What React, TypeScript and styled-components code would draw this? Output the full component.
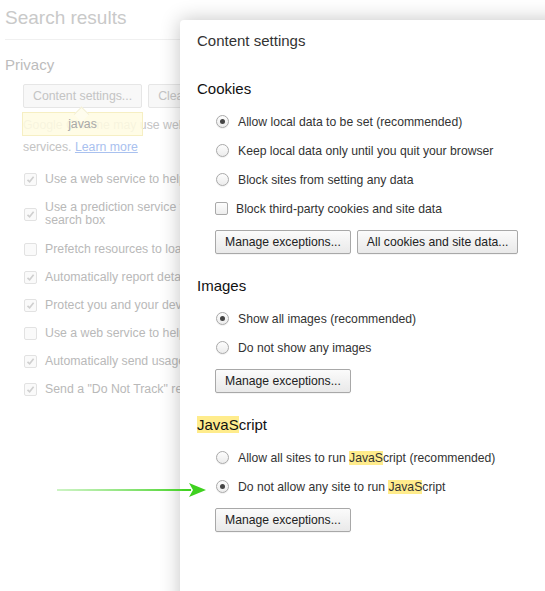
import React from "react";
import styled, { createGlobalStyle } from "styled-components";

const Global = createGlobalStyle`
  html, body { margin: 0; padding: 0; background: #fff; }
  body { font-family: "Liberation Sans", Arial, sans-serif; }
`;

const Screen = styled.div`
  position: relative;
  width: 545px;
  height: 591px;
  overflow: hidden;
  background: #fff;
`;

/* ---------- background settings page ---------- */
const Page = styled.div`
  width: 760px;
  padding: 6px 0 0 5px;
  color: #bdbdbd;
  font-size: 12.3px;
`;

const PageTitle = styled.div`
  font-size: 19px;
  line-height: 24px;
  color: #c9c9c9;
  padding-bottom: 9px;
  border-bottom: 1px solid #f0f0f0;
`;

const SectionTitle = styled.div`
  font-size: 15px;
  line-height: 20px;
  color: #bcbcbc;
  margin-top: 15px;
`;

const PageBody = styled.div`
  padding-left: 18px;
`;

const ButtonRow = styled.div`
  position: relative;
  display: flex;
  gap: 6px;
  margin-top: 9px;
`;

const GhostButton = styled.div`
  height: 24px;
  box-sizing: border-box;
  padding: 0 9px;
  display: flex;
  align-items: center;
  border: 1px solid #e6e6e6;
  border-radius: 2px;
  background: #f8f8f8;
  color: #c4c4c4;
  white-space: nowrap;
`;

const Tooltip = styled.div`
  position: absolute;
  left: -1px;
  top: 28px;
  width: 121px;
  height: 24px;
  box-sizing: border-box;
  background: rgba(255, 252, 226, 0.86);
  border: 1px solid #f6efc3;
  display: flex;
  align-items: center;
  justify-content: center;
  color: #a8a8a8;
  z-index: 1;
  &::before {
    content: "";
    position: absolute;
    left: 53px;
    top: -7px;
    width: 10px;
    height: 10px;
    background: #fffdee;
    border-left: 1px solid #f3efd6;
    border-top: 1px solid #f3efd6;
    transform: rotate(45deg) translate(2px, 2px);
  }
`;

const Desc = styled.div`
  margin-top: 6px;
  line-height: 22px;
  color: #c4c4c4;
  white-space: nowrap;
`;

const LearnMore = styled.span`
  color: #a9c1ef;
  text-decoration: underline;
`;

const CheckList = styled.div`
  margin-top: 7px;
  display: flex;
  flex-direction: column;
`;

const CheckRow = styled.div<{ $tall?: boolean }>`
  display: flex;
  align-items: center;
  gap: 8px;
  height: ${(p) => (p.$tall ? 42 : 28)}px;
  padding-left: 1px;
  white-space: nowrap;
  line-height: 13px;
  color: #b9b9b9;
`;

const GhostBox = styled.div`
  width: 11px;
  height: 11px;
  border: 1px solid #e2e2e2;
  border-radius: 2px;
  background: #fafafa;
  flex: none;
  display: flex;
  align-items: center;
  justify-content: center;
`;

/* ---------- dialog ---------- */
const Dialog = styled.div`
  position: absolute;
  left: 180px;
  top: 20px;
  width: 400px;
  height: 600px;
  background: #fff;
  border-top-left-radius: 4px;
  box-shadow: 0 0 20px rgba(0, 0, 0, 0.24);
  padding: 11px 0 0 17px;
  box-sizing: border-box;
  color: #333;
  z-index: 2;
`;

const DialogTitle = styled.div`
  font-size: 15px;
  line-height: 20px;
  color: #333;
  margin-bottom: 28px;
`;

const Section = styled.div`
  margin-bottom: 22px;
`;

const Heading = styled.div`
  font-size: 15px;
  line-height: 20px;
  color: #111;
  margin-bottom: 8px;
`;

const Options = styled.div`
  padding-left: 18px;
  display: flex;
  flex-direction: column;
`;

const OptionRow = styled.div`
  height: 29px;
  display: flex;
  align-items: center;
  gap: 9px;
  font-size: 12.2px;
  color: #333;
  white-space: nowrap;
`;

const Radio = styled.span<{ $checked?: boolean }>`
  width: 13px;
  height: 13px;
  margin-left: 1px;
  box-sizing: border-box;
  border-radius: 50%;
  border: 1px solid #a9a9a9;
  background: linear-gradient(#fdfdfd, #ececec);
  box-shadow: 0 1px 1px rgba(0, 0, 0, 0.06);
  display: flex;
  align-items: center;
  justify-content: center;
  flex: none;
  &::after {
    content: "";
    width: 5px;
    height: 5px;
    border-radius: 50%;
    background: #444;
    display: ${(p) => (p.$checked ? "block" : "none")};
  }
`;

const Check = styled.span`
  width: 13px;
  height: 13px;
  box-sizing: border-box;
  border: 1px solid #a9a9a9;
  border-radius: 2px;
  background: linear-gradient(#fdfdfd, #ededed);
  flex: none;
  margin-right: -1px;
`;

const Buttons = styled.div`
  display: flex;
  gap: 6px;
  margin-top: 7px;
`;

const Button = styled.div`
  height: 24px;
  box-sizing: border-box;
  padding: 0 9px;
  display: flex;
  align-items: center;
  border: 1px solid #a8a8a8;
  border-radius: 2px;
  background: linear-gradient(#fbfbfb, #e9e9e9);
  box-shadow: 0 1px 0 rgba(0, 0, 0, 0.04);
  font-size: 12.2px;
  color: #222;
  white-space: nowrap;
`;

const Mark = styled.span`
  background: #ffec8c;
`;

const Arrow = styled.svg`
  position: absolute;
  left: 55px;
  top: 482px;
  z-index: 3;
`;

const bgChecks: { text: React.ReactNode; checked: boolean; tall?: boolean }[] = [
  { text: "Use a web service to help resolve navigation errors", checked: true },
  {
    text: (
      <span>
        Use a prediction service to help complete searches and URLs typed in the address bar or the app launcher
        <br />
        search box
      </span>
    ),
    checked: true,
    tall: true,
  },
  { text: "Prefetch resources to load pages more quickly", checked: false },
  { text: "Automatically report details of possible security incidents to Google", checked: true },
  { text: "Protect you and your device from dangerous sites", checked: true },
  { text: "Use a web service to help resolve spelling errors", checked: false },
  { text: "Automatically send usage statistics and crash reports to Google", checked: true },
  { text: 'Send a "Do Not Track" request with your browsing traffic', checked: true },
];

const Tick = () => (
  <svg width="9" height="9" viewBox="0 0 9 9">
    <path d="M1.5 4.8 L3.6 6.8 L7.6 1.8" fill="none" stroke="#cfcfcf" strokeWidth="1.6" />
  </svg>
);

export default function App() {
  return (
    <>
      <Global />
      <Screen>
        <Page>
          <PageTitle>Search results</PageTitle>
          <SectionTitle>Privacy</SectionTitle>
          <PageBody>
            <ButtonRow>
              <GhostButton>Content settings...</GhostButton>
              <GhostButton>Clear browsing data...</GhostButton>
              <Tooltip>javas</Tooltip>
            </ButtonRow>
            <Desc>
              Google Chrome may use web services to improve your browsing experience. You may optionally disable these
              <br />
              services. <LearnMore>Learn more</LearnMore>
            </Desc>
            <CheckList>
              {bgChecks.map((c, i) => (
                <CheckRow key={i} $tall={c.tall}>
                  <GhostBox>{c.checked && <Tick />}</GhostBox>
                  {c.text}
                </CheckRow>
              ))}
            </CheckList>
          </PageBody>
        </Page>

        <Dialog>
          <DialogTitle>Content settings</DialogTitle>
          <Section>
            <Heading>Cookies</Heading>
            <Options>
              <OptionRow>
                <Radio $checked />
                Allow local data to be set (recommended)
              </OptionRow>
              <OptionRow>
                <Radio />
                Keep local data only until you quit your browser
              </OptionRow>
              <OptionRow>
                <Radio />
                Block sites from setting any data
              </OptionRow>
              <OptionRow>
                <Check />
                Block third-party cookies and site data
              </OptionRow>
              <Buttons>
                <Button>Manage exceptions...</Button>
                <Button>All cookies and site data...</Button>
              </Buttons>
            </Options>
          </Section>
          <Section>
            <Heading>Images</Heading>
            <Options>
              <OptionRow>
                <Radio $checked />
                Show all images (recommended)
              </OptionRow>
              <OptionRow>
                <Radio />
                Do not show any images
              </OptionRow>
              <Buttons>
                <Button>Manage exceptions...</Button>
              </Buttons>
            </Options>
          </Section>
          <Section>
            <Heading>
              <Mark>JavaS</Mark>cript
            </Heading>
            <Options>
              <OptionRow>
                <Radio />
                <span>
                  Allow all sites to run <Mark>JavaS</Mark>cript (recommended)
                </span>
              </OptionRow>
              <OptionRow>
                <Radio $checked />
                <span>
                  Do not allow any site to run <Mark>JavaS</Mark>cript
                </span>
              </OptionRow>
              <Buttons>
                <Button>Manage exceptions...</Button>
              </Buttons>
            </Options>
          </Section>
        </Dialog>

        <Arrow width="155" height="16" viewBox="0 0 155 16">
          <defs>
            <linearGradient id="ag" x1="0" x2="1" y1="0" y2="0">
              <stop offset="0" stopColor="#9be88a" />
              <stop offset="1" stopColor="#3fd11f" />
            </linearGradient>
          </defs>
          <path d="M2 7.6 L136 6.9 L136 9.1 L2 8.4 Z" fill="url(#ag)" />
          <path d="M134 1 L151 8 L134 15 L138 8 Z" fill="#3fd11f" />
        </Arrow>
      </Screen>
    </>
  );
}
